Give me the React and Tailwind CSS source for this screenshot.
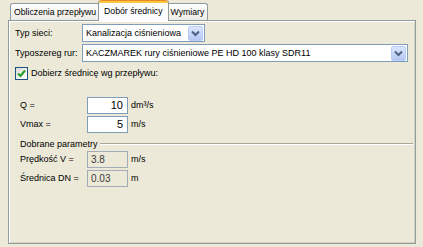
import React from 'react';

const font = { fontFamily: '"Liberation Sans", Arial, sans-serif' };

function Chevron() {
  return (
    <svg width="9" height="7" viewBox="0 0 9 7" className="block">
      <path d="M1 1.5 L4.5 5 L8 1.5" fill="none" stroke="#4d6185" strokeWidth="2" />
    </svg>
  );
}

function Combo({ value, width }) {
  return (
    <div
      className="flex h-[18px] items-center justify-between border border-[#7f9db9] bg-white pl-[3px] pr-px"
      style={{ width }}
    >
      <span className="text-[9px] leading-none text-black whitespace-nowrap">{value}</span>
      <div className="flex h-[15px] w-[15px] items-center justify-center rounded-[2px] border border-[#b9cdf7] bg-gradient-to-b from-[#dbe6fd] to-[#b5c8f3]">
        <Chevron />
      </div>
    </div>
  );
}

function Tab({ label, active }) {
  if (active) {
    return (
      <div className="relative z-10 -mx-[2px] -mb-px flex h-[21px] flex-col rounded-t-[3px] border-x border-[#919b9c] bg-[#fcfcfe]">
        <div className="h-[3px] rounded-t-[3px] border-t border-[#e68b2c] bg-[#ffc73c]" />
        <div className="flex flex-1 items-center px-[5px] pb-[2px] text-[8.7px] leading-none whitespace-nowrap">{label}</div>
      </div>
    );
  }
  return (
    <div className="flex h-[17px] items-center rounded-t-[3px] border border-b-0 border-[#919b9c] bg-gradient-to-b from-white to-[#ecebe6] px-[3px] text-[8.7px] leading-none whitespace-nowrap">
      {label}
    </div>
  );
}

function ValueRow({ label, value, unit, disabled }) {
  return (
    <div className="flex items-center">
      <span className="w-[67px] text-[9px] leading-none">{label}</span>
      {disabled ? (
        <div className="flex h-[17px] w-[41px] items-center border border-[#a3abb6] bg-[#ece9d8] pl-[3px] text-[10px] leading-none text-[#3a3a3a]">
          {value}
        </div>
      ) : (
        <div className="flex h-[17px] w-[41px] items-center justify-end border border-[#7f9db9] bg-white pr-[4px] text-[11px] leading-none text-black">
          {value}
        </div>
      )}
      <span className="ml-[3px] text-[9px] leading-none">{unit}</span>
    </div>
  );
}

export default function App() {
  return (
    <div className="h-[247px] w-[423px] overflow-hidden bg-[#ece9d8] text-black" style={font}>
      <div className="flex h-[20px] items-end pl-[10px] pt-px">
        <Tab label="Obliczenia przepływu" />
        <Tab label="Dobór średnicy" active />
        <Tab label="Wymiary" />
      </div>

      <div className="ml-[8px] h-[224px] w-[408px] border border-[#919b9c] shadow-[inset_1px_1px_0_#fff,inset_-1px_-1px_0_#d6d3c6] pt-[3px]">
        <div className="flex flex-col gap-[2px] pl-[6px]">
          <div className="flex items-center">
            <span className="w-[67px] text-[9px] leading-none">Typ sieci:</span>
            <Combo value="Kanalizacja ciśnieniowa" width="123px" />
          </div>
          <div className="flex items-center">
            <span className="w-[67px] text-[9px] leading-none">Typoszereg rur:</span>
            <Combo value="KACZMAREK rury ciśnieniowe PE HD 100 klasy SDR11" width="326px" />
          </div>
        </div>

        <div className="mt-[5px] flex items-center pl-[6px]">
          <div className="flex h-[13px] w-[13px] items-center justify-center border border-[#1c5180] bg-gradient-to-br from-[#dcdcd7] to-white">
            <svg width="9" height="9" viewBox="0 0 9 9">
              <path d="M1 4.5 L3.5 7 L8 1.5" fill="none" stroke="#21a121" strokeWidth="2" />
            </svg>
          </div>
          <span className="ml-[3px] text-[9px] leading-none">Dobierz średnicę wg przepływu:</span>
        </div>

        <div className="mt-[17px] flex flex-col gap-[2px] pl-[11px]">
          <ValueRow label="Q =" value="10" unit="dm³/s" />
          <ValueRow label="Vmax =" value="5" unit="m/s" />
        </div>

        <div className="mt-[5px] flex h-[12px] items-center pl-[11px] pr-[2px]">
          <span className="text-[9px] leading-none">Dobrane parametry</span>
          <div className="ml-[2px] h-[2px] flex-1 border-t border-[#a7a69a] border-b border-b-white" />
        </div>

        <div className="mt-px flex flex-col gap-[2px] pl-[11px]">
          <ValueRow label="Prędkość V =" value="3.8" unit="m/s" disabled />
          <ValueRow label="Średnica DN =" value="0.03" unit="m" disabled />
        </div>
      </div>
    </div>
  );
}
